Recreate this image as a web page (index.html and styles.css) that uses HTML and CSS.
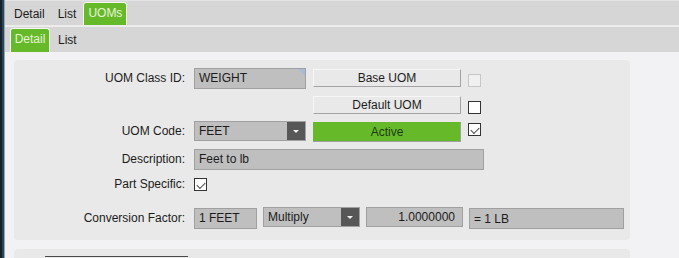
FILE: index.html
```html
<!DOCTYPE html>
<html lang="en">
<head>
  <meta charset="UTF-8" />
  <title>UOMs</title>
  <link rel="stylesheet" href="styles.css">
</head>
<body>
  <div class="strip"></div>
  <div class="main">
    <div class="tabbar top">
      <span class="tab">Detail</span>
      <span class="tab">List</span>
      <span class="tab on">UOMs</span>
    </div>
    <div class="tabbar sub">
      <span class="tab on">Detail</span>
      <span class="tab">List</span>
    </div>

    <div class="panel">
      <div class="row r1">
        <label>UOM Class ID:</label>
        <div class="field w112 corner">WEIGHT</div>
        <div class="btn">Base UOM</div>
        <span class="chk off"></span>
      </div>
      <div class="row r2">
        <label></label>
        <div class="spacer"></div>
        <div class="btn">Default UOM</div>
        <span class="chk"></span>
      </div>
      <div class="row r3">
        <label>UOM Code:</label>
        <div class="field w112 combo">FEET<span class="drop"></span></div>
        <div class="btn active">Active</div>
        <span class="chk yes"></span>
      </div>
      <div class="row r4">
        <label>Description:</label>
        <div class="field desc">Feet to lb</div>
      </div>
      <div class="row r5">
        <label>Part Specific:</label>
        <span class="chk yes"></span>
      </div>
      <div class="row r6">
        <label>Conversion Factor:</label>
        <div class="field from">1 FEET</div>
        <div class="field combo op">Multiply<span class="drop"></span></div>
        <div class="field num">1.0000000</div>
        <div class="field to">= 1 LB</div>
      </div>
    </div>

    <div class="panel next">
      <div class="cut"></div>
    </div>
  </div>
</body>
</html>
```

FILE: styles.css
```css
* { box-sizing: border-box; }
body { margin: 0; display: flex; height: 258px; overflow: hidden; background: #f2f2f4; font-family: "Liberation Sans", Arial, sans-serif; font-size: 12px; color: #1c1c1c; }
.strip { width: 5px; flex: none; background: linear-gradient(to right, #14202a 0, #14202a 2px, #27475a 2px, #27475a 4px, #9aa4aa 4px); }
.main { flex: 1; }

.tabbar { height: 25px; background: #d6d6d6; display: flex; align-items: flex-end; padding-left: 1px; }
.tabbar.top { height: 25px; border-top: 1px solid #e4e4e4; }
.tabbar.sub { height: 27px; border-top: 2px solid #ececec; }
.tab { height: 22px; line-height: 23px; padding: 0 4px; margin-right: 5px; }
.top .tab:first-child { margin-left: 4px; }
.tab.on { background: #66ba2a; color: #e6f2d6; border: 1px solid #f4f8ee; border-bottom: none; border-radius: 3px 3px 0 0; padding: 0 3px; line-height: 21px; }
.top .tab.on { height: 23px; margin-left: -2px; width: 44px; text-align: center; }
.sub .tab { line-height: 21px; }
.sub .tab.on { height: 24px; width: 40px; text-align: center; margin-left: 4px; margin-right: 4px; }

.panel { margin: 8px 0 0 9px; width: 616px; background: #e9e9e9; border-radius: 4px; padding: 8px 0 11px; }
.panel.next { margin-top: 9px; height: 20px; padding: 7px 0 0 31px; border-radius: 4px 4px 0 0; }
.cut { width: 143px; border-top: 1px solid #4a4a4a; }

.row { display: flex; align-items: flex-start; }
.row label { width: 172px; flex: none; text-align: right; padding-right: 1px; line-height: 21px; }
.r2 { margin-top: 7px; }
.r3 { margin-top: 7px; }
.r4 { margin-top: 7px; }
.r5 { margin-top: 8px; }
.r6 { margin-top: 17px; }
.r2 label, .r5 label { line-height: 13px; }

.field { height: 21px; margin-left: 8px; background: #bfbfbf; border: 1px solid #a0a0a0; line-height: 19px; padding-left: 4px; position: relative; }
.w112 { width: 112px; }
.spacer { width: 112px; margin-left: 8px; }
.corner::after { content: ""; position: absolute; right: 0; top: 0; border-style: solid; border-width: 0 7px 7px 0; border-color: transparent #a8bcd8 transparent transparent; }
.combo { height: 20px; }
.drop { position: absolute; right: 0; top: 0; width: 18px; height: 18px; background: #575757; }
.drop::after { content: ""; position: absolute; left: 6px; top: 8px; border-style: solid; border-width: 3px 3px 0 3px; border-color: #f0f0f0 transparent transparent transparent; }

.btn { width: 148px; height: 18px; margin: 1px 0 0 7px; border: 1px solid; border-color: #f6f6f6 #a4a4a4 #a4a4a4 #f6f6f6; text-align: center; line-height: 16px; }
.r2 .btn { margin-top: 0; }
.btn.active { height: 20px; line-height: 18px; background: #66ba2a; color: #1e3a12; border-color: #66ba2a #a0a0a0 #a0a0a0 #66ba2a; }

.chk { width: 13px; height: 13px; flex: none; border: 1px solid #333; background: #fff; margin: 6px 0 0 7px; position: relative; }
.r2 .chk { margin-top: 5px; }
.r3 .chk { margin-top: 2px; }
.chk.off { border-color: #c6c6c6; background: #f0f0f0; margin-top: 6px; }
.chk.yes::after { content: ""; position: absolute; left: 2px; top: 1px; width: 7px; height: 4px; border-left: 1.5px solid #444; border-bottom: 1.5px solid #444; transform: translate(0, 2px) rotate(-45deg); }
.r5 .chk { margin: 0 0 0 8px; }

.desc { width: 290px; }
.from { width: 63px; }
.op { width: 97px; margin-left: 6px; height: 20px; margin-top: -1px; }
.num { width: 97px; margin-left: 6px; height: 20px; margin-top: -1px; text-align: right; padding-right: 7px; }
.to { width: 155px; margin-left: 6px; line-height: 21px; }
```
